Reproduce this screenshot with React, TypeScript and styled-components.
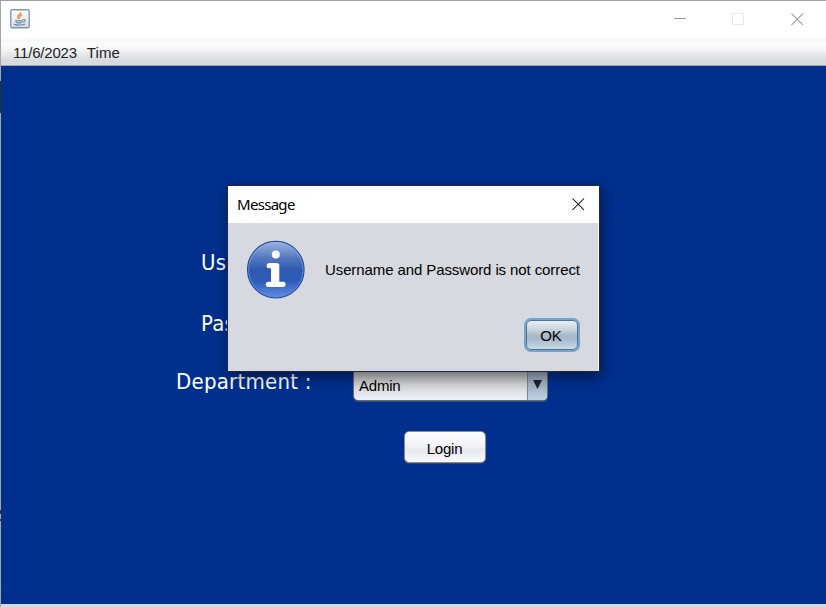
import React from "react";
import styled, { createGlobalStyle } from "styled-components";

const GlobalStyle = createGlobalStyle`
  * { box-sizing: border-box; }
  body { margin: 0; overflow: hidden; }
  button { font: inherit; }
  svg { display: block; flex: none; }
`;

const Window = styled.div`
  position: relative;
  display: flex;
  flex-direction: column;
  width: 826px;
  height: 607px;
  border-top: 1px solid #a0a0a0;
  border-left: 1px solid #a3a5a6;
  background: #fff;
  color: #111;
  font: 15px/18px "Liberation Sans", Arial, sans-serif;
  white-space: nowrap;
`;

const EdgeMark = styled.i<{ $top: number; $height: number; $color: string }>`
  position: absolute;
  left: -1px;
  top: ${(p) => p.$top - 1}px;
  width: 1px;
  height: ${(p) => p.$height}px;
  background: ${(p) => p.$color};
`;

const TitleBar = styled.header`
  display: flex;
  align-items: center;
  justify-content: space-between;
  height: 37px;
  padding: 0 22px 2px 9px;
`;

const WindowControls = styled.div`
  display: flex;
  gap: 46px;
  padding-top: 1px;
`;

const MenuBar = styled.nav`
  display: flex;
  gap: 10px;
  height: 28px;
  padding: 6px 12px 0;
  border-bottom: 1px solid #a2a6b1;
  background: linear-gradient(#f5f8f8 0, #fafcfb 25%, #f4f5f6 42%, #d8dbe0 82%, #d6d9df 100%);
  color: #222;
`;

const MenuItem = styled.span<{ $spacing: number }>`
  letter-spacing: ${(p) => p.$spacing}px;
`;

const Content = styled.main`
  flex: 1;
  padding-top: 180px;
  background: #002f8e;
`;

const StatusEdge = styled.footer`
  height: 3px;
  background: #d6d9df;
`;

const Form = styled.form`
  display: grid;
  grid-template-columns: 177px 194px;
  grid-template-rows: 60px 60px 65px 34px;
  padding-left: 175px;
`;

const Label = styled.label<{ $indent?: number; $top?: number }>`
  grid-column: 1;
  padding: ${(p) => p.$top ?? 3}px 0 0 ${(p) => p.$indent ?? 0}px;
  color: #fff;
  font: 22px/28px "DejaVu Sans Condensed", "DejaVu Sans", sans-serif;
  font-stretch: condensed;
  letter-spacing: 0.25px;
`;

const Combo = styled.div`
  display: flex;
  width: 195px;
  height: 34px;
  margin: 1px 0 0;
  border: 1px solid #646b78;
  border-radius: 5px;
  overflow: hidden;
  background: linear-gradient(#bfc1c3, #d0d2d3 45%, #d8dadd 60%, #eef0f6);
  box-shadow: 0 1px 1px #364d7f;
  color: #000;
`;

const ComboValue = styled.span`
  flex: 1;
  padding: 9px 0 0 5px;
  letter-spacing: -0.2px;
`;

const ComboArrow = styled.span`
  display: flex;
  justify-content: center;
  width: 20px;
  padding-top: 12px;
  border-left: 1px solid #7489a0;
  background: linear-gradient(#a3b1c1, #a4b6c7 60%, #bed2e1);
`;

const PushButton = styled.button<{ $focused?: boolean }>`
  display: block;
  width: ${(p) => (p.$focused ? 52 : 82)}px;
  height: ${(p) => (p.$focused ? 30 : 32)}px;
  padding: ${(p) => (p.$focused ? "2px 2px 0 0" : "3px 1px 0 0")};
  border: 1px solid ${(p) => (p.$focused ? "#55718d" : "#858990")};
  border-radius: 5px;
  background: ${(p) =>
    p.$focused
      ? "linear-gradient(#e9eef2, #cad5de 30%, #a9bac9 52%, #a5b8c9 62%, #c9dae6)"
      : "linear-gradient(#fcfcfd, #f2f4f7 45%, #e5e8ee 60%, #f8fafe)"};
  box-shadow: ${(p) => (p.$focused ? "0 0 0 2px #73a4d1" : "0 1px 1px #3c4a68")};
  color: #000;
  letter-spacing: -0.2px;
`;

const LoginCell = styled.div`
  grid-column: 2;
  padding: 0 0 0 51px;
`;

const Dialog = styled.section`
  position: absolute;
  left: 226px;
  top: 184px;
  display: flex;
  flex-direction: column;
  width: 373px;
  height: 187px;
  border: 1px solid #20283a;
  background: #d6d9df;
  box-shadow: 2px 5px 13px rgba(0, 0, 0, 0.48);
  color: #000;
`;

const DialogTitle = styled.header`
  display: flex;
  align-items: center;
  justify-content: space-between;
  height: 37px;
  padding: 0 14px 1px 9px;
  background: #fff;
  font: 15px/20px "Noto Sans", "Open Sans", sans-serif;
  letter-spacing: -0.7px;
`;

const DialogBody = styled.div`
  flex: 1;
  padding: 17px 18px 0 19px;
  border-right: 1px solid #f7f8fa;
`;

const MessageRow = styled.div`
  display: flex;
  align-items: center;
  gap: 19px;
  height: 60px;
`;

const MessageText = styled.p`
  margin: 0;
  letter-spacing: -0.1px;
`;

const DialogActions = styled.div`
  display: flex;
  justify-content: flex-end;
  padding: 20px 2px 0 0;
`;

const JavaIcon = () => (
  <svg width="20" height="20" viewBox="0 0 20 20" fill="none">
    <defs>
      <linearGradient id="tile" x2="0" y2="1">
        <stop stopColor="#fff" />
        <stop offset="1" stopColor="#d8dde1" />
      </linearGradient>
    </defs>
    <rect x=".75" y=".75" width="18.5" height="18" rx="1.5" fill="url(#tile)" stroke="#8296a9" strokeWidth="1.3" />
    <path d="M10.6 3.2c1.2 2-3.6 3-2.7 5 .3.8 1 1.1 1.2 1.8M12 5.7c-3 1.7-2.2 2.2-1.8 3.2" stroke="#e88b42" strokeWidth="1.5" />
    <path d="M5.2 10.6c.2 3.5 1 4.1 3.3 4.1h1.7c1.8 0 2.7-1.5 3-4.1-2.2.8-5.9.8-8 0z" fill="#7d9ab3" />
    <path d="M6.4 12.4c1.8.6 3.8.6 5.6 0" stroke="#d9e3ea" strokeWidth=".7" />
    <path d="M13.2 10.6c3-.5 2.3 2.2-.4 2.5M4 15.2c2 1.3 9.2 1.1 11.2-.2" stroke="#6485a1" strokeWidth="1.1" />
  </svg>
);

const CloseIcon = ({ color }: { color: string }) => (
  <svg width="13" height="13" viewBox="0 0 13 13">
    <path d="M.5.5l11.5 11.5M12 .5L.5 12" stroke={color} strokeWidth="1.05" />
  </svg>
);

const InfoIcon = () => (
  <svg width="59" height="60" viewBox="0 0 59 60">
    <defs>
      <linearGradient id="ball" x2="0" y2="1">
        <stop stopColor="#9cb2de" />
        <stop offset=".3" stopColor="#5277bf" />
        <stop offset=".5" stopColor="#2d59b0" />
        <stop offset=".7" stopColor="#2d5bb7" />
        <stop offset="1" stopColor="#628ee8" />
      </linearGradient>
      <linearGradient id="rim" x2="0" y2="1">
        <stop stopColor="#a0b5df" />
        <stop offset=".5" stopColor="#6185c7" />
        <stop offset="1" stopColor="#5a83dc" />
      </linearGradient>
    </defs>
    <circle cx="28.8" cy="29.7" r="28.3" fill="url(#ball)" stroke="#234b9c" strokeWidth="1.1" />
    <circle cx="28.8" cy="29.7" r="27.2" fill="none" stroke="url(#rim)" />
    <circle cx="28.8" cy="14.6" r="4" fill="#fafafa" />
    <path
      d="M22.3 23h7.5a2.5 2.5 0 0 1 2.5 2.5v16.2H36a2.65 2.65 0 0 1 0 5.3H21.4a2.65 2.65 0 0 1 0-5.3H24V28.3h-1.7a2.65 2.65 0 0 1 0-5.3z"
      fill="#fafafa"
    />
  </svg>
);

export default function App() {
  return (
    <>
      <GlobalStyle />
      <Window>
        <TitleBar>
          <JavaIcon />
          <WindowControls>
            <svg width="12" height="13"><path d="M0 5.5h12" stroke="#939393" /></svg>
            <svg width="13" height="13"><rect x=".5" y=".5" width="11" height="11" fill="none" stroke="#e8e8e8" /></svg>
            <CloseIcon color="#888" />
          </WindowControls>
        </TitleBar>
        <MenuBar>
          <MenuItem $spacing={-0.2}>11/6/2023</MenuItem>
          <MenuItem $spacing={0.1}>Time</MenuItem>
        </MenuBar>
        <Content>
          <Form>
            <Label $indent={25}>Username :</Label>
            <Label $indent={25} $top={4}>Password :</Label>
            <Label $top={2}>Department :</Label>
            <Combo>
              <ComboValue>Admin</ComboValue>
              <ComboArrow>
                <svg width="9" height="9"><path d="M0 0h9L4.5 9z" fill="#202327" /></svg>
              </ComboArrow>
            </Combo>
            <LoginCell>
              <PushButton type="button">Login</PushButton>
            </LoginCell>
          </Form>
        </Content>
        <StatusEdge />
        <EdgeMark $top={81} $height={32} $color="#303030" />
        <EdgeMark $top={510} $height={4} $color="#35302c" />
        <EdgeMark $top={519} $height={2} $color="#303030" />
        <Dialog>
          <DialogTitle>
            <span>Message</span>
            <CloseIcon color="#000" />
          </DialogTitle>
          <DialogBody>
            <MessageRow>
              <InfoIcon />
              <MessageText>Username and Password is not correct</MessageText>
            </MessageRow>
            <DialogActions>
              <PushButton type="button" $focused>OK</PushButton>
            </DialogActions>
          </DialogBody>
        </Dialog>
      </Window>
    </>
  );
}
